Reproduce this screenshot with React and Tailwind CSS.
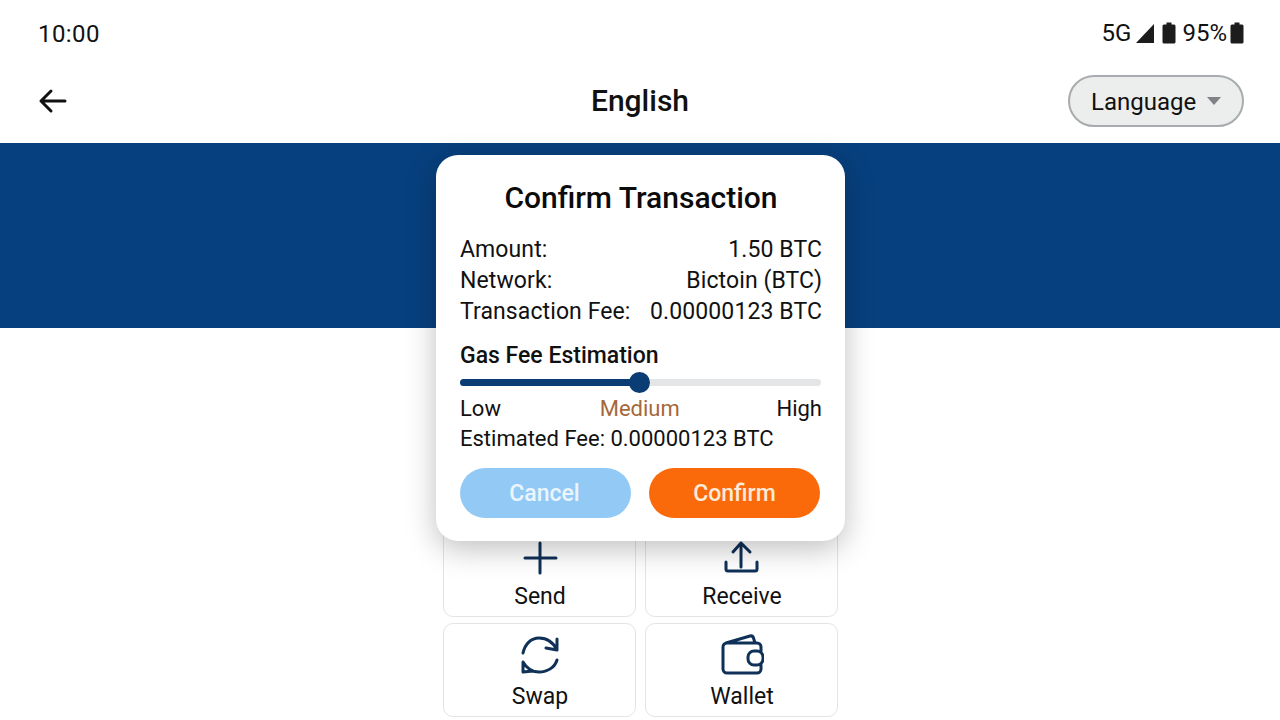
import React from 'react';

const NAVY = '#0f3057';

function Battery() {
  return (
    <svg width="14" height="22" viewBox="0 0 14 22" fill="#1c1c1c">
      <path d="M4.5 0.5h5v2h2.5a1.5 1.5 0 0 1 1.5 1.5v16a1.5 1.5 0 0 1-1.5 1.5h-10a1.5 1.5 0 0 1-1.5-1.5v-16a1.5 1.5 0 0 1 1.5-1.5h2.5z" />
    </svg>
  );
}

function ActionCard({ label, children }) {
  return (
    <div className="h-[94px] border border-[#e2e4e6] rounded-[10px] bg-white flex flex-col items-center pt-[10px]">
      <div className="h-[42px] flex items-center justify-center">{children}</div>
      <span className="mt-[6px] pl-[1px] text-[23px] leading-[30px] text-[#111]">{label}</span>
    </div>
  );
}

function IconSvg({ children }) {
  return (
    <svg width="44" height="44" viewBox="0 0 44 44" fill="none" stroke={NAVY} strokeWidth="3" strokeLinecap="round" strokeLinejoin="round">
      {children}
    </svg>
  );
}

function Row({ label, value }) {
  return (
    <div className="flex justify-between h-[31px] leading-[31px] tracking-[0.1px]">
      <span>{label}</span>
      <span>{value}</span>
    </div>
  );
}

export default function App() {
  return (
    <div className="relative w-[1280px] h-[720px] overflow-hidden bg-white text-[#111] font-['Roboto',sans-serif]">
      {/* status bar */}
      <div className="h-[66px] flex items-center justify-between pl-[38px] pr-[36px]">
        <span className="text-[24px] tracking-[0.4px] pt-[2px]">10:00</span>
        <div className="flex items-center text-[24px]">
          <span>5G</span>
          <svg className="ml-[5px]" width="18" height="19" viewBox="0 0 18 19" fill="#1c1c1c"><path d="M18 0v19H0z" /></svg>
          <span className="ml-[8px] flex"><Battery /></span>
          <span className="ml-[6px]">95%</span>
          <span className="ml-[3px] flex"><Battery /></span>
        </div>
      </div>

      {/* header */}
      <div className="relative h-[77px] flex items-center justify-center pb-[8px]">
        <svg className="absolute left-[36px] top-[18px]" width="33" height="33" viewBox="0 0 33 33" fill="none" stroke="#111" strokeWidth="3" strokeLinecap="round" strokeLinejoin="round">
          <path d="M29 17H5M15 7 5 17l10 10" />
        </svg>
        <span className="text-[30px] font-medium">English</span>
        <div className="absolute left-[1068px] top-[9px] w-[176px] h-[52px] rounded-full border-2 border-[#a9acaf] bg-[#eceded] flex items-center pl-[21px] text-[24px]">
          <span className="pt-[1px]">Language</span>
          <svg className="ml-[11px]" width="14" height="8" viewBox="0 0 14 8" fill="#808285"><path d="M0 0h14L7 8z" /></svg>
        </div>
      </div>

      {/* blue band */}
      <div className="h-[185px] bg-[#07407e]" />

      {/* action grid */}
      <div className="w-[395px] ml-[443px] mt-[195px] grid grid-cols-2 gap-x-[9px] gap-y-[6px]">
        <ActionCard label="Send">
          <IconSvg><path d="M22 10v30M7 25h31" /></IconSvg>
        </ActionCard>
        <ActionCard label="Receive">
          <IconSvg><path d="M21 34V10M13 19l8-9 9 9M6 29v7a2 2 0 0 0 2 2h27a2 2 0 0 0 2-2v-7" /></IconSvg>
        </ActionCard>
        <ActionCard label="Swap">
          <IconSvg><path d="M5 20C7 11 13 5 21 5c8 0 14 4 18 12M39 6v11l-11-2M39 27c-2 7-9 12-18 12-7 0-12-3-16-10M5 29v10l10-1" /></IconSvg>
        </ActionCard>
        <ActionCard label="Wallet">
          <IconSvg>
            <path d="M6 10 30 3c2-.5 3 .5 3.500 2l1.500 5M41 18v-4a4 4 0 0 0-4-4H7a4 4 0 0 0-4 4v22a4 4 0 0 0 4 4h30a4 4 0 0 0 4-4v-4" />
            <rect x="28" y="18" width="15" height="14" rx="6" fill="#fff" />
          </IconSvg>
        </ActionCard>
      </div>

      {/* modal */}
      <div className="absolute left-[436px] top-[155px] w-[409px] h-[386px] bg-white rounded-[22px] shadow-[0_8px_30px_rgba(0,0,0,0.25)] pl-[24px] pr-[23px] pt-[24px] text-[23px]">
        <h2 className="text-center text-[30px] leading-[38px] font-medium text-[#0b0b0b]">Confirm Transaction</h2>
        <div className="mt-[17px]">
          <Row label="Amount:" value="1.50 BTC" />
          <Row label="Network:" value="Bictoin (BTC)" />
          <Row label="Transaction Fee:" value="0.00000123 BTC" />
        </div>
        <div className="mt-[13px] text-[23px] leading-[32px] font-medium">Gas Fee Estimation</div>
        <div className="relative mt-[7px] h-[7px] w-[361px] rounded-full bg-[#e4e5e6]">
          <div className="h-full w-[180px] rounded-full bg-[#0a3d73]" />
          <div className="absolute left-[169px] top-[-7px] w-[21px] h-[21px] rounded-full bg-[#0a3d73]" />
        </div>
        <div className="mt-[7px] flex justify-between items-center h-[31px] text-[22px]">
          <span>Low</span>
          <span className="text-[#a5683a] ml-[2px]">Medium</span>
          <span>High</span>
        </div>
        <div className="h-[30px] leading-[30px] text-[22px]">Estimated Fee: 0.00000123 BTC</div>
        <div className="mt-[14px] w-[360px] flex justify-between">
          <div className="w-[171px] h-[50px] pt-[2px] rounded-full bg-[#93c9f5] text-[#eaf5fd] font-medium flex items-center justify-center pr-[2px]">Cancel</div>
          <div className="w-[171px] h-[50px] pt-[2px] rounded-full bg-[#fb6a0a] text-[#fdebd8] font-medium flex items-center justify-center">Confirm</div>
        </div>
      </div>
    </div>
  );
}
